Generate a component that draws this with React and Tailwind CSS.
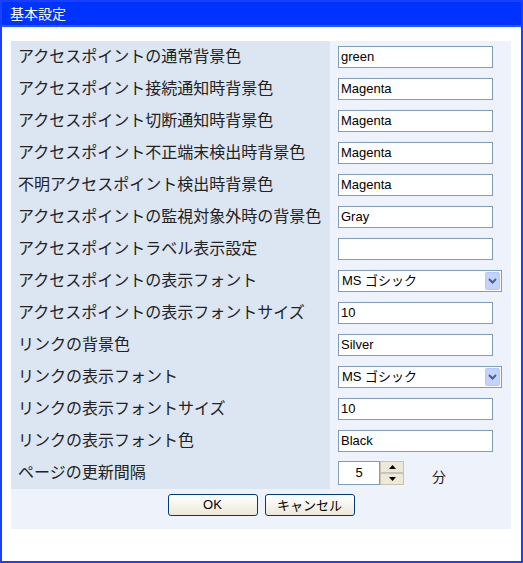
import React from 'react';

const rows = [
    { label: 'アクセスポイントの通常背景色', type: 'text', value: 'green' },
    { label: 'アクセスポイント接続通知時背景色', type: 'text', value: 'Magenta' },
    { label: 'アクセスポイント切断通知時背景色', type: 'text', value: 'Magenta' },
    { label: 'アクセスポイント不正端末検出時背景色', type: 'text', value: 'Magenta' },
    { label: '不明アクセスポイント検出時背景色', type: 'text', value: 'Magenta' },
    { label: 'アクセスポイントの監視対象外時の背景色', type: 'text', value: 'Gray' },
    { label: 'アクセスポイントラベル表示設定', type: 'text', value: '' },
    { label: 'アクセスポイントの表示フォント', type: 'select', value: 'MS ゴシック' },
    { label: 'アクセスポイントの表示フォントサイズ', type: 'text', value: '10' },
    { label: 'リンクの背景色', type: 'text', value: 'Silver' },
    { label: 'リンクの表示フォント', type: 'select', value: 'MS ゴシック' },
    { label: 'リンクの表示フォントサイズ', type: 'text', value: '10' },
    { label: 'リンクの表示フォント色', type: 'text', value: 'Black' },
    { label: 'ページの更新間隔', type: 'spin', value: '5' },
];

const jp = { fontFamily: '"Noto Sans CJK JP", "Noto Sans", sans-serif' };
const ui = { fontFamily: '"Liberation Sans", "Noto Sans CJK JP", sans-serif' };

function TextBox({ value }) {
    return (
        <div className="w-[155px] h-[22px] border border-[#7f9db9] bg-white px-[2px] text-[13px] leading-[20px] text-black" style={ui}>
            {value}
        </div>
    );
}

function SelectBox({ value }) {
    return (
        <div className="w-[164px] h-[22px] border border-[#7f9db9] bg-white flex items-center justify-between pl-[3px] pr-px text-[13px] text-black" style={ui}>
            <span>{value}</span>
            <div className="w-[15px] h-[18px] rounded-[2px] bg-[#c3d3fd] border border-[#b5c8f8] flex items-center justify-center">
                <svg width="9" height="6" viewBox="0 0 9 6">
                    <path d="M1 1 L4.5 4.5 L8 1" fill="none" stroke="#4d6185" strokeWidth="2" />
                </svg>
            </div>
        </div>
    );
}

function SpinBox({ value }) {
    return (
        <div className="flex items-center">
            <div className="flex">
                <div className="w-[42px] h-[24px] border border-[#7f9db9] bg-white text-center text-[13px] leading-[22px] text-black" style={ui}>
                    {value}
                </div>
                <div className="flex flex-col w-[24px] h-[24px]">
                    <div className="h-[12px] bg-[#ece9d8] border border-[#c8c4b4] flex items-center justify-center">
                        <svg width="7" height="4" viewBox="0 0 7 4"><path d="M0 4 L3.5 0 L7 4 Z" fill="#000" /></svg>
                    </div>
                    <div className="h-[12px] bg-[#ece9d8] border border-[#c8c4b4] flex items-center justify-center">
                        <svg width="7" height="4" viewBox="0 0 7 4"><path d="M0 0 L3.5 4 L7 0 Z" fill="#000" /></svg>
                    </div>
                </div>
            </div>
            <span className="ml-[28px] mt-[6px] text-[14px] text-[#222]" style={jp}>分</span>
        </div>
    );
}

export default function App() {
    return (
        <div className="w-[523px] h-[563px] border-2 border-[#1a3fff] bg-white">
            <div className="h-[25px] bg-[#0033ff] border-b-2 border-[#2a55ff] px-[8px] text-white text-[14px] leading-[23px]" style={jp}>
                基本設定
            </div>
            <div className="ml-[9px] mt-[14px] w-[500px] h-[488px] bg-[#eef2fa]">
                {rows.map((r, i) => (
                    <div key={i} className="flex h-[32px]">
                        <div className="w-[319px] bg-[#dce6f2] pl-[7px] pb-[4px] flex items-center text-[16px] text-[#222] whitespace-nowrap" style={jp}>
                            {r.label}
                        </div>
                        <div className="flex-1 pl-[8px] flex items-center">
                            {r.type === 'text' && <TextBox value={r.value} />}
                            {r.type === 'select' && <SelectBox value={r.value} />}
                            {r.type === 'spin' && <SpinBox value={r.value} />}
                        </div>
                    </div>
                ))}
                <div className="flex justify-center gap-[7px] pt-[5px]">
                    <button className="w-[90px] h-[22px] rounded-[3px] border border-[#003c74] bg-gradient-to-b from-white to-[#ece9d8] text-[13px] text-black" style={ui}>OK</button>
                    <button className="w-[90px] h-[22px] rounded-[3px] border border-[#003c74] bg-gradient-to-b from-white to-[#ece9d8] text-[13px] text-black" style={jp}>キャンセル</button>
                </div>
            </div>
        </div>
    );
}
